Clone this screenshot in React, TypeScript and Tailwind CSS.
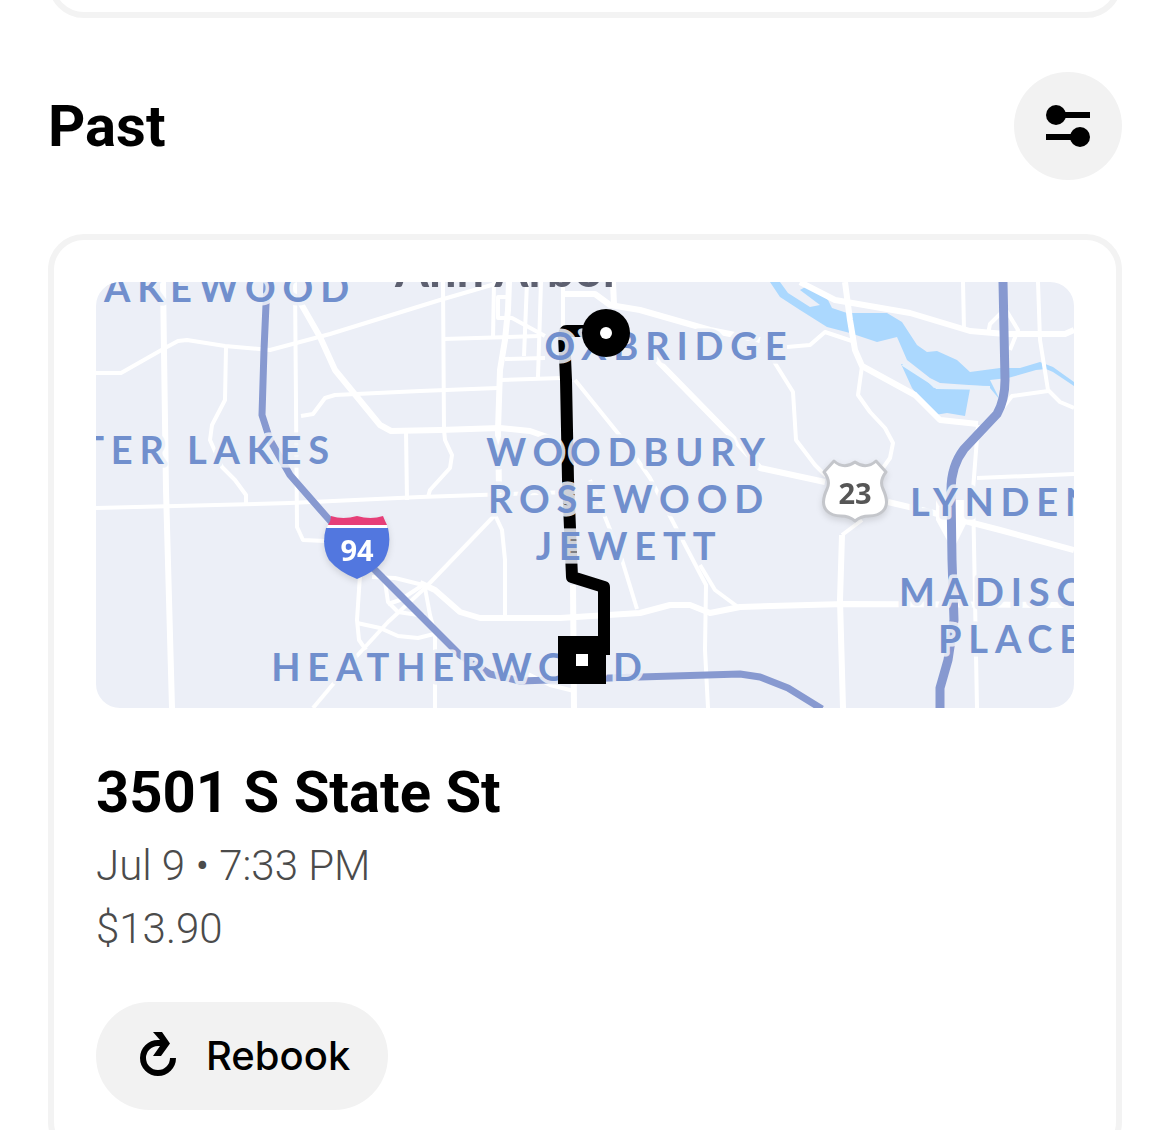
import React from 'react';
import { clsx } from 'clsx';

const trip = {
	destination: '3501 S State St',
	date: 'Jul 9 • 7:33 PM',
	price: '$13.90',
};

const MINOR_ROADS = [
	'M96 373H121L165 348L178 341L187 340L225 346L270 350L330 334L440 300L495 284',
	'M226 347L225 400L212 425L210 440L222 467L235 480L246 495V504',
	'M295 282L297 527L303 540L325 541',
	'M301 416L313 414L325 398L335 395L420 391L498 388',
	'M406 431L407 500',
	'M443 282L444 430L445 440L452 455L450 468L430 490L428 497',
	'M443 339L540 336',
	'M494 282L493 339',
	'M527 282L524 356',
	'M541 282L538 377',
	'M563 282V328',
	'M508 297H498V318H512L545 336',
	'M505 359L545 358',
	'M500 380L562 378',
	'M96 508L290 503L420 497L570 492',
	'M495 515L425 588L388 622L355 658L313 708',
	'M495 515L502 530L505 560V617',
	'M575 380L625 442L650 478L672 520L706 585L705 650L708 708',
	'M590 480L607 522L622 560L637 609',
	'M360 575L357 620L359 640L366 650',
	'M357 623L380 628L398 636L418 638L434 634',
	'M384 575L388 602L398 612L425 616',
	'M372 577L395 578L423 585L400 600L388 604',
	'M425 588L430 615L435 634V708',
	'M520 670L550 685L574 691',
	'M700 565L715 590L738 607',
	'M842 535L862 520',
	'M862 366L858 395L870 412L885 428L893 443L890 458L878 475',
	'M773 360L793 392L796 440L815 465L826 476',
	'M787 347L810 345L825 332L852 341',
	'M963 282L964 330',
	'M1038 282L1040 340L1048 390L1060 402L1074 408',
	'M1048 391L1012 396L995 418',
	'M978 425L973 490L977 708',
	'M977 478L1074 474',
	'M1002 312L990 324L988 334',
	'M1006 310L1018 330L1010 350',
];

const MAIN_ROADS = [
	'M163 282L166 490L172 708',
	'M300 302L320 337L335 370L380 425L391 431L440 430L500 428L530 431L550 438L566 452',
	'M509 282L508 310L505 340L500 370L498 430L499 490',
	'M563 294H595L610 305L640 310L710 330L760 340',
	'M613 282L614 305',
	'M650 353L735 440L760 468L825 482',
	'M888 502L930 512L1000 530L1074 550',
	'M420 583L435 590L460 612L480 618H560L640 613L670 605H690L710 613L740 607L845 604L1074 605',
	'M573 585L574 708',
	'M842 535L840 600L843 708',
	'M800 282L835 300L910 313L970 331L1005 334H1065L1074 330',
	'M845 282L850 320L855 350L862 366L915 395L940 420L978 424',
];

const WATER = [
	'M770 282H780L788 293L810 307L820 305L800 290L807 286L817 289L828 300L832 308L847 313L887 313L902 322L917 345L927 352L937 351L957 360L970 372L1000 368L1020 368L1040 362L1053 367L1074 382V386L1053 372L1046 369L1036 370L1008 378L990 380L1000 400L990 388L983 386L940 383L930 378L907 360L897 337L877 342L850 333L827 327L800 310L780 297Z',
	'M901 364L907 365L928 382L934 388L940 386L970 389L965 416L947 413L935 415L923 402L912 388Z',
];

interface MapLabel {
	text: string;
	x: number;
	y: number;
	anchor: 'start' | 'middle' | 'end';
}

const LABELS: MapLabel[] = [
	{ text: 'AKEWOOD', x: 104, y: 302, anchor: 'start' },
	{ text: 'TER LAKES', x: 336, y: 464, anchor: 'end' },
	{ text: 'OXBRIDGE', x: 669, y: 360, anchor: 'middle' },
	{ text: 'WOODBURY', x: 629, y: 466, anchor: 'middle' },
	{ text: 'ROSEWOOD', x: 629, y: 513, anchor: 'middle' },
	{ text: 'JEWETT', x: 629, y: 560, anchor: 'middle' },
	{ text: 'HEATHERWOOD', x: 460, y: 681, anchor: 'middle' },
	{ text: 'LYNDEN', x: 910, y: 516, anchor: 'start' },
	{ text: 'MADISON', x: 899, y: 606, anchor: 'start' },
	{ text: 'PLACE', x: 938, y: 653, anchor: 'start' },
];

const FilterIcon: React.FC = () => (
	<svg viewBox="0 0 48 48" className="size-12" aria-hidden="true">
		<circle cx="12" cy="13" r="10" />
		<circle cx="36" cy="35" r="10" />
		<path d="M12 10h34v6H12zM2 32h34v6H2z" />
	</svg>
);

const RebookIcon: React.FC = () => (
	<svg viewBox="0 0 48 48" className="size-12" aria-hidden="true">
		<path d="M39 26A15 15 0 1 1 24 11H28" fill="none" stroke="black" strokeWidth="6" />
		<path d="M19 0H28L36 11.5L27 24H19L26 14V8Z" />
	</svg>
);

const TripMap: React.FC = () => (
	<svg
		viewBox="96 282 978 426"
		role="img"
		aria-label="Trip route"
		className="block w-full rounded-3xl bg-[#eceff7]"
	>
		{WATER.map((d) => (
			<path key={d} d={d} fill="#abd8fe" />
		))}
		<g fill="none" stroke="white" strokeLinejoin="round">
			{MINOR_ROADS.map((d) => (
				<path key={d} d={d} strokeWidth="4" />
			))}
			{MAIN_ROADS.map((d) => (
				<path key={d} d={d} strokeWidth="6" />
			))}
		</g>
		<path d="M936 500H968V520L956 544H949L936 520Z" fill="white" />
		<path d="M903 364L931 382L937 387L990 388" fill="none" stroke="#e8f1fb" strokeWidth="4" />

		<g fill="none" stroke="#8799d0" strokeLinejoin="round">
			<path
				d="M267 282L264 350L262 415L270 440L290 475L325 515L370 565L460 655L490 674L520 681L640 677L740 674L760 677L788 688L822 709"
				strokeWidth="7"
			/>
			<path
				d="M1003 282L1005 380Q1005 400 997 414L964 449Q951 466 951 490L952 560L954 620L948 660L940 688V709"
				strokeWidth="9"
			/>
		</g>

		{/* route */}
		<path
			d="M600 331H567Q564 331 564 335L566 380L568 480L572 577L604 587V655"
			fill="none"
			stroke="black"
			strokeWidth="12"
			strokeLinejoin="round"
		/>

		<text
			x="508"
			y="287"
			textAnchor="middle"
			className="fill-[#5d6070] font-['Lato'] text-[49px] font-bold"
		>
			Ann Arbor
		</text>
		<g className="fill-[#718fcd] font-['Lato'] text-[38px] font-bold tracking-[0.18em]">
			{LABELS.map(({ text, x, y, anchor }) => (
				<text
					key={text}
					x={x}
					y={y}
					textAnchor={anchor}
					stroke="#eceff7"
					strokeOpacity="0.9"
					strokeWidth="7"
					strokeLinejoin="round"
					paintOrder="stroke"
				>
					{text}
				</text>
			))}
		</g>

		{/* I-94 */}
		<g className="drop-shadow-md">
			<path d="M331 516Q343 520 357 516Q371 520 383 516Q385 521 387 525H328Q331 521 331 516Z" fill="#e63f78" />
			<path d="M328 525H387V528H327Z" fill="white" />
			<path d="M326 528H388Q392 546 384 560Q375 572 357 579Q339 572 329 560Q321 546 326 528Z" fill="#5277df" />
			<text
				x="357"
				y="561"
				textAnchor="middle"
				className="fill-white font-['Open_Sans'] text-[29px] font-bold"
			>
				94
			</text>
		</g>

		{/* US-23 */}
		<g className="drop-shadow-md">
			<path
				d="M834 461Q844 470 855 462Q866 470 876 461L886 472Q879 481 883 489Q890 504 883 511Q878 516 869 516Q861 516 855 521Q849 516 841 516Q832 516 827 511Q820 504 827 489Q831 481 824 472Z"
				fill="white"
				stroke="#c4c6cb"
				strokeWidth="3"
				strokeLinejoin="round"
			/>
			<text
				x="855"
				y="504"
				textAnchor="middle"
				className="fill-[#565656] font-['Open_Sans'] text-[29px] font-bold"
			>
				23
			</text>
		</g>

		{/* pickup and drop-off */}
		<circle cx="606" cy="333" r="24" />
		<circle cx="606" cy="333" r="6" fill="white" />
		<path d="M558 636h48v48h-48z" />
		<path d="M576 654h12v12h-12z" fill="white" />
	</svg>
);

const cardBorder = 'border-[6px] border-[#f3f3f3]';
const controlSurface = 'flex h-[108px] items-center justify-center rounded-full bg-[#f2f2f2]';

const App: React.FC = () => (
	<main className="h-screen overflow-hidden bg-white px-12 font-['Roboto',sans-serif] text-black">
		<div className={clsx('-mt-20 h-[98px] rounded-[36px]', cardBorder)} />

		<header className="flex items-center justify-between py-[54px]">
			<h1 className="text-[58px] leading-[72px] font-bold">Past</h1>
			<button type="button" aria-label="Filter trips" className={clsx('w-[108px]', controlSurface)}>
				<FilterIcon />
			</button>
		</header>

		<article className={clsx('rounded-[36px] p-[42px]', cardBorder)}>
			<TripMap />
			<h2 className="mt-12 text-[58px] leading-[72px] font-bold">{trip.destination}</h2>
			<div className="mt-[6px] text-[42px] leading-[63px] font-light text-[#4b4b4b]">
				<p>{trip.date}</p>
				<p>{trip.price}</p>
			</div>
			<button
				type="button"
				className={clsx(
					"mt-[42px] gap-6 px-[38px] font-['Inter',sans-serif] text-[40px] font-medium",
					controlSurface
				)}
			>
				<RebookIcon />
				Rebook
			</button>
		</article>
	</main>
);

export default App;
